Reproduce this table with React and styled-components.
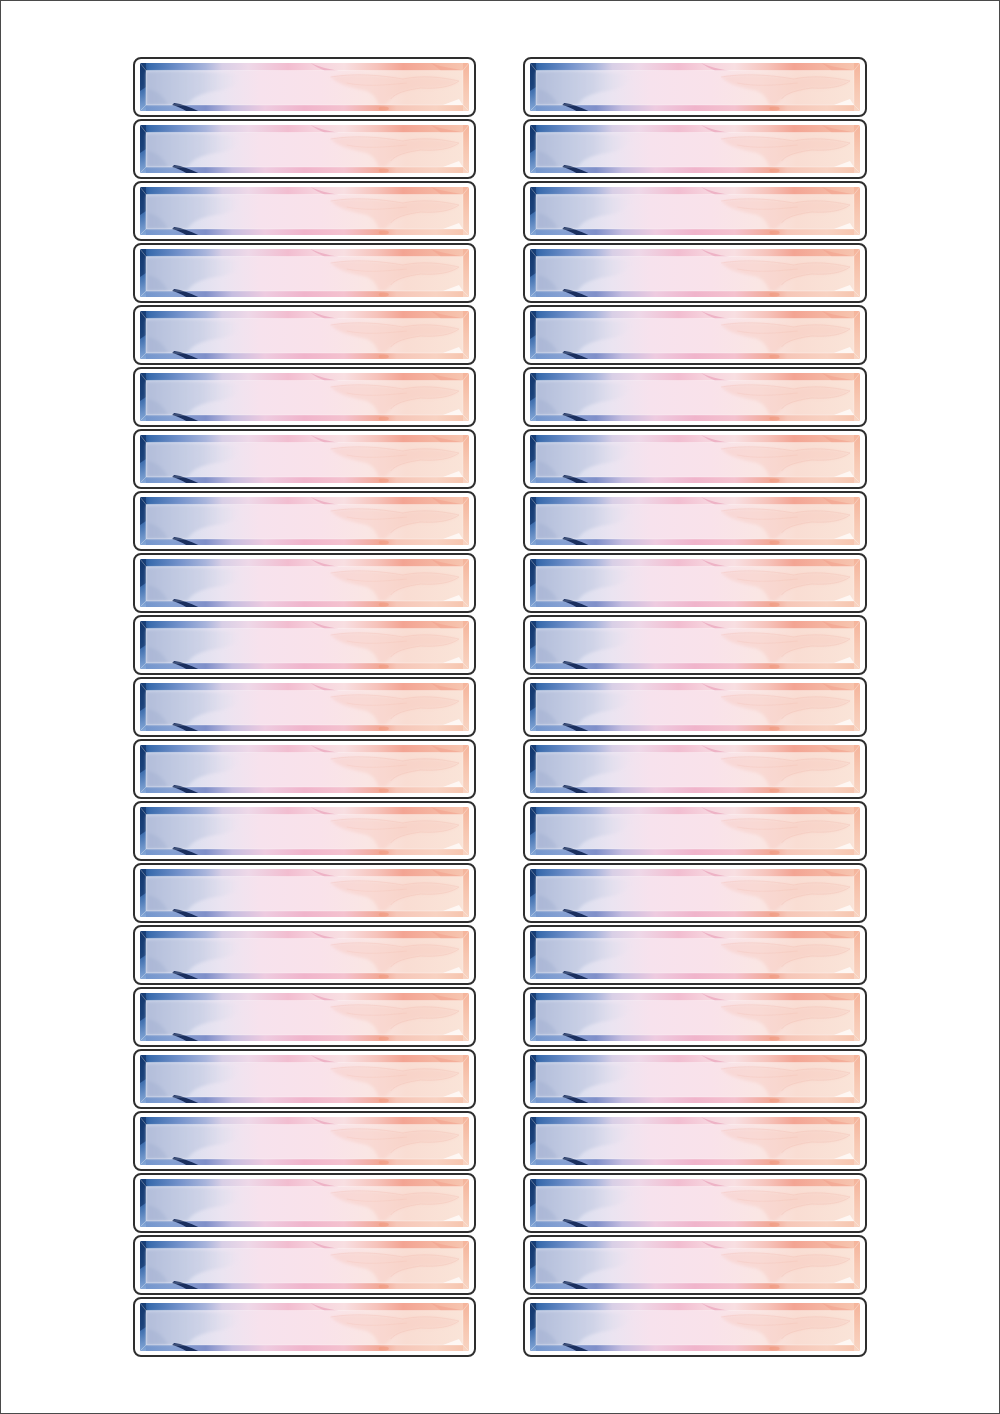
import React, { useId } from 'react';
import styled, { createGlobalStyle } from 'styled-components';

const GlobalStyle = createGlobalStyle`
  html, body {
    margin: 0;
    padding: 0;
    background: #ffffff;
    font-family: "Liberation Sans", Arial, sans-serif;
  }
`;

const Sheet = styled.div`
  box-sizing: border-box;
  width: 1000px;
  height: 1414px;
  border: 1px solid #4a4a4a;
  background: #ffffff;
  padding: 56px 0 0 132px;
  display: grid;
  grid-template-columns: 343px 344px;
  column-gap: 47px;
  align-content: start;
`;

const Column = styled.div`
  display: flex;
  flex-direction: column;
  gap: 2px;
`;

const Label = styled.div`
  box-sizing: border-box;
  height: 60px;
  border: 2px solid #2e2e2e;
  border-radius: 8px;
  padding: 4px 5px;
  background: #ffffff;
`;

const ArtSvg = styled.svg`
  display: block;
  width: 100%;
  height: 48px;
  border-radius: 2px;
`;

// watercolour strip inside a label
function Art() {
  const id = useId().replace(/:/g, '');
  const g = (n) => `${id}-${n}`;
  return (
    <ArtSvg viewBox="0 0 328 48" preserveAspectRatio="none">
      <defs>
        <linearGradient id={g('base')} x1="0" x2="1" y1="0" y2="0">
          <stop offset="0" stopColor="#1d4a86" />
          <stop offset="0.03" stopColor="#3a6cae" />
          <stop offset="0.12" stopColor="#7392cb" />
          <stop offset="0.2" stopColor="#a9b5dc" />
          <stop offset="0.25" stopColor="#d8cfe6" />
          <stop offset="0.33" stopColor="#eed8e8" />
          <stop offset="0.45" stopColor="#f2bdd0" />
          <stop offset="0.53" stopColor="#f6d2dd" />
          <stop offset="0.62" stopColor="#f8dfe2" />
          <stop offset="0.72" stopColor="#f6c3bb" />
          <stop offset="0.8" stopColor="#f3a493" />
          <stop offset="0.9" stopColor="#f5b6a2" />
          <stop offset="1" stopColor="#f7c8b2" />
        </linearGradient>
        <linearGradient id={g('bottom')} x1="0" x2="1" y1="0" y2="0">
          <stop offset="0" stopColor="#6f94cc" />
          <stop offset="0.1" stopColor="#86a1d3" />
          <stop offset="0.2" stopColor="#7f8fc9" />
          <stop offset="0.28" stopColor="#c5bde0" />
          <stop offset="0.38" stopColor="#eecbe0" />
          <stop offset="0.5" stopColor="#f0b4cb" />
          <stop offset="0.62" stopColor="#f4c2cf" />
          <stop offset="0.73" stopColor="#f2a896" />
          <stop offset="0.78" stopColor="#f6c6b8" />
          <stop offset="0.9" stopColor="#f8d2c2" />
          <stop offset="1" stopColor="#f6c2aa" />
        </linearGradient>
        <linearGradient id={g('left')} x1="0" x2="0" y1="0" y2="1">
          <stop offset="0" stopColor="#163d76" />
          <stop offset="0.45" stopColor="#2c5fa2" />
          <stop offset="1" stopColor="#86a8d8" />
        </linearGradient>
        <linearGradient id={g('right')} x1="0" x2="0" y1="0" y2="1">
          <stop offset="0" stopColor="#f5b49b" />
          <stop offset="0.5" stopColor="#f7c6b0" />
          <stop offset="1" stopColor="#f8d4c2" />
        </linearGradient>
        <linearGradient id={g('inner')} x1="0" x2="1" y1="0" y2="0">
          <stop offset="0" stopColor="#cbd4ea" />
          <stop offset="0.12" stopColor="#d9deef" />
          <stop offset="0.24" stopColor="#ebe4f1" />
          <stop offset="0.36" stopColor="#f7e2ed" />
          <stop offset="0.55" stopColor="#f9e2ea" />
          <stop offset="0.7" stopColor="#fae6e4" />
          <stop offset="0.82" stopColor="#f9ddd3" />
          <stop offset="1" stopColor="#fae4d8" />
        </linearGradient>
        <linearGradient id={g('blob')} x1="0" x2="1" y1="0" y2="0">
          <stop offset="0" stopColor="#a9b5d4" stopOpacity="0.75" />
          <stop offset="0.6" stopColor="#bcc5de" stopOpacity="0.5" />
          <stop offset="1" stopColor="#d6d9ea" stopOpacity="0" />
        </linearGradient>
        <filter id={g('soft')} x="-10%" y="-30%" width="120%" height="160%">
          <feGaussianBlur stdDeviation="1.6" />
        </filter>
      </defs>

      <rect x="0" y="0" width="328" height="48" fill={`url(#${g('base')})`} />
      <rect x="0" y="42" width="328" height="6" fill={`url(#${g('bottom')})`} />
      <rect x="0" y="0" width="6" height="48" fill={`url(#${g('left')})`} />
      <rect x="322" y="0" width="6" height="48" fill={`url(#${g('right')})`} />
      <path d="M0 0 C8 3 10 14 6 24 L0 28 Z" fill="#123468" opacity="0.7" />

      <rect x="6" y="7.5" width="316" height="34.5" fill={`url(#${g('inner')})`} />
      <g filter={`url(#${g('soft')})`}>
        <path
          d="M6 9 C28 7 62 8 98 11 C104 18 94 26 76 28 C62 30 52 34 47 42 L6 42 Z"
          fill={`url(#${g('blob')})`}
        />
        <path d="M8 26 C18 28 24 34 28 42 L8 42 Z" fill="#9eadcf" opacity="0.35" />
        <path
          d="M190 14 C214 10 240 12 262 16 C282 12 300 14 318 18 C312 24 296 26 280 25 C266 27 256 30 250 36 C246 40 244 42 244 42 L238 42 C236 36 234 32 226 28 C212 25 198 22 190 14 Z"
          fill="#f6c2b8"
          opacity="0.35"
        />
      </g>
      <path
        d="M190 14 C214 10 240 12 262 16 C282 12 300 14 318 18 M250 36 C254 30 266 27 280 25 C296 26 310 24 318 18"
        fill="none"
        stroke="#efb0a4"
        strokeWidth="0.35"
        opacity="0.7"
      />
      <path d="M206 20 C226 24 246 22 266 20" fill="none" stroke="#f0b6aa" strokeWidth="0.35" opacity="0.6" />
      <ellipse cx="243" cy="45.5" rx="5" ry="2" fill="#f09a7e" opacity="0.6" />
      <path d="M170 0 C180 4 186 6 198 7.5 L184 7.5 C178 5 174 3 170 0 Z" fill="#e690ad" opacity="0.5" />
      <path d="M290 0 C300 4 310 5 322 7.5 L300 7.5 Z" fill="#f19b87" opacity="0.45" />

      <path d="M34 40 C42 41 50 44 58 48 L46 48 C42 45.5 38 43.5 32 42 Z" fill="#1a2f5f" />
      <path d="M302 42 L318 36 L322 42 Z" fill="#ffffff" opacity="0.7" />

      <g stroke="#ffffff" strokeWidth="0.6" opacity="0.5" fill="none">
        <rect x="6" y="7.5" width="316" height="34.5" />
        <line x1="0" y1="0" x2="6" y2="7.5" />
        <line x1="328" y1="0" x2="322" y2="7.5" />
        <line x1="0" y1="48" x2="6" y2="42" />
        <line x1="328" y1="48" x2="322" y2="42" />
      </g>
    </ArtSvg>
  );
}

const rows = Array.from({ length: 21 }, (_, i) => i);

export default function App() {
  return (
    <>
      <GlobalStyle />
      <Sheet>
        {[0, 1].map((c) => (
          <Column key={c}>
            {rows.map((r) => (
              <Label key={r}>
                <Art />
              </Label>
            ))}
          </Column>
        ))}
      </Sheet>
    </>
  );
}
